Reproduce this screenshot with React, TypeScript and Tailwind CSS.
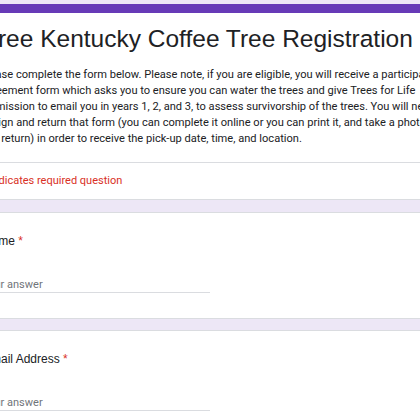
export default function App() {
  return (
    <div className="h-[420px] w-[420px] overflow-hidden bg-[#ede7f6]">
      <div className="ml-[-35px] flex w-[540px] flex-col pt-[4px]">
        <HeaderCard />
        <div className="mt-[12px]">
          <QuestionCard title="Name" />
        </div>
        <div className="mt-[11px]">
          <QuestionCard title="Email Address" />
        </div>
      </div>
    </div>
  );
}

function HeaderCard() {
  return (
    <div className="overflow-hidden rounded-lg border-x border-b border-[#dadce0] bg-white">
      <div className="h-[9px] bg-[#673ab7]" />
      <div className="px-[16px] pt-[11px] pb-[15px]">
        <h1 className="pl-[1px] font-['Liberation_Sans',Arial,sans-serif] text-[24.5px] leading-[30px] whitespace-nowrap text-[#202124]">
          Free Kentucky Coffee Tree Registration
        </h1>
        <p className="mt-[13px] ml-[-2px] font-['Roboto',sans-serif] text-[11.1px] leading-[16px] whitespace-nowrap text-[#202124]">
          Please complete the form below. Please note, if you are eligible, you
          will receive a participant
          <br />
          agreement form which asks you to ensure you can water the trees and
          give Trees for Life
          <br />
          permission to email you in years 1, 2, and 3, to assess survivorship
          of the trees. You will need
          <br />
          to sign and return that form (you can complete it online or you can
          print it, and take a photo
          <br />
          and return) in order to receive the pick-up date, time, and location.
        </p>
      </div>
      <div className="border-t border-[#dadce0] px-[16px] pt-[10px] pb-[11px] font-['Roboto',sans-serif] text-[11px] leading-[15px] text-[#d93025]">
        * Indicates required question
      </div>
    </div>
  );
}

function QuestionCard({ title }: { title: string }) {
  return (
    <div className="rounded-lg border border-[#dadce0] bg-white px-[16px] pt-[19px] pb-[25px]">
      <div className="pl-[1px] font-['Liberation_Sans',Arial,sans-serif] text-[12px] leading-[18px] text-[#202124]">
        {title} <span className="text-[#d93025]">*</span>
      </div>
      <div className="mt-[27px] w-[228px] border-b border-[#dadce0] font-['Roboto',sans-serif] text-[11px] leading-[15px] text-[#70757a]">
        Your answer
      </div>
    </div>
  );
}
